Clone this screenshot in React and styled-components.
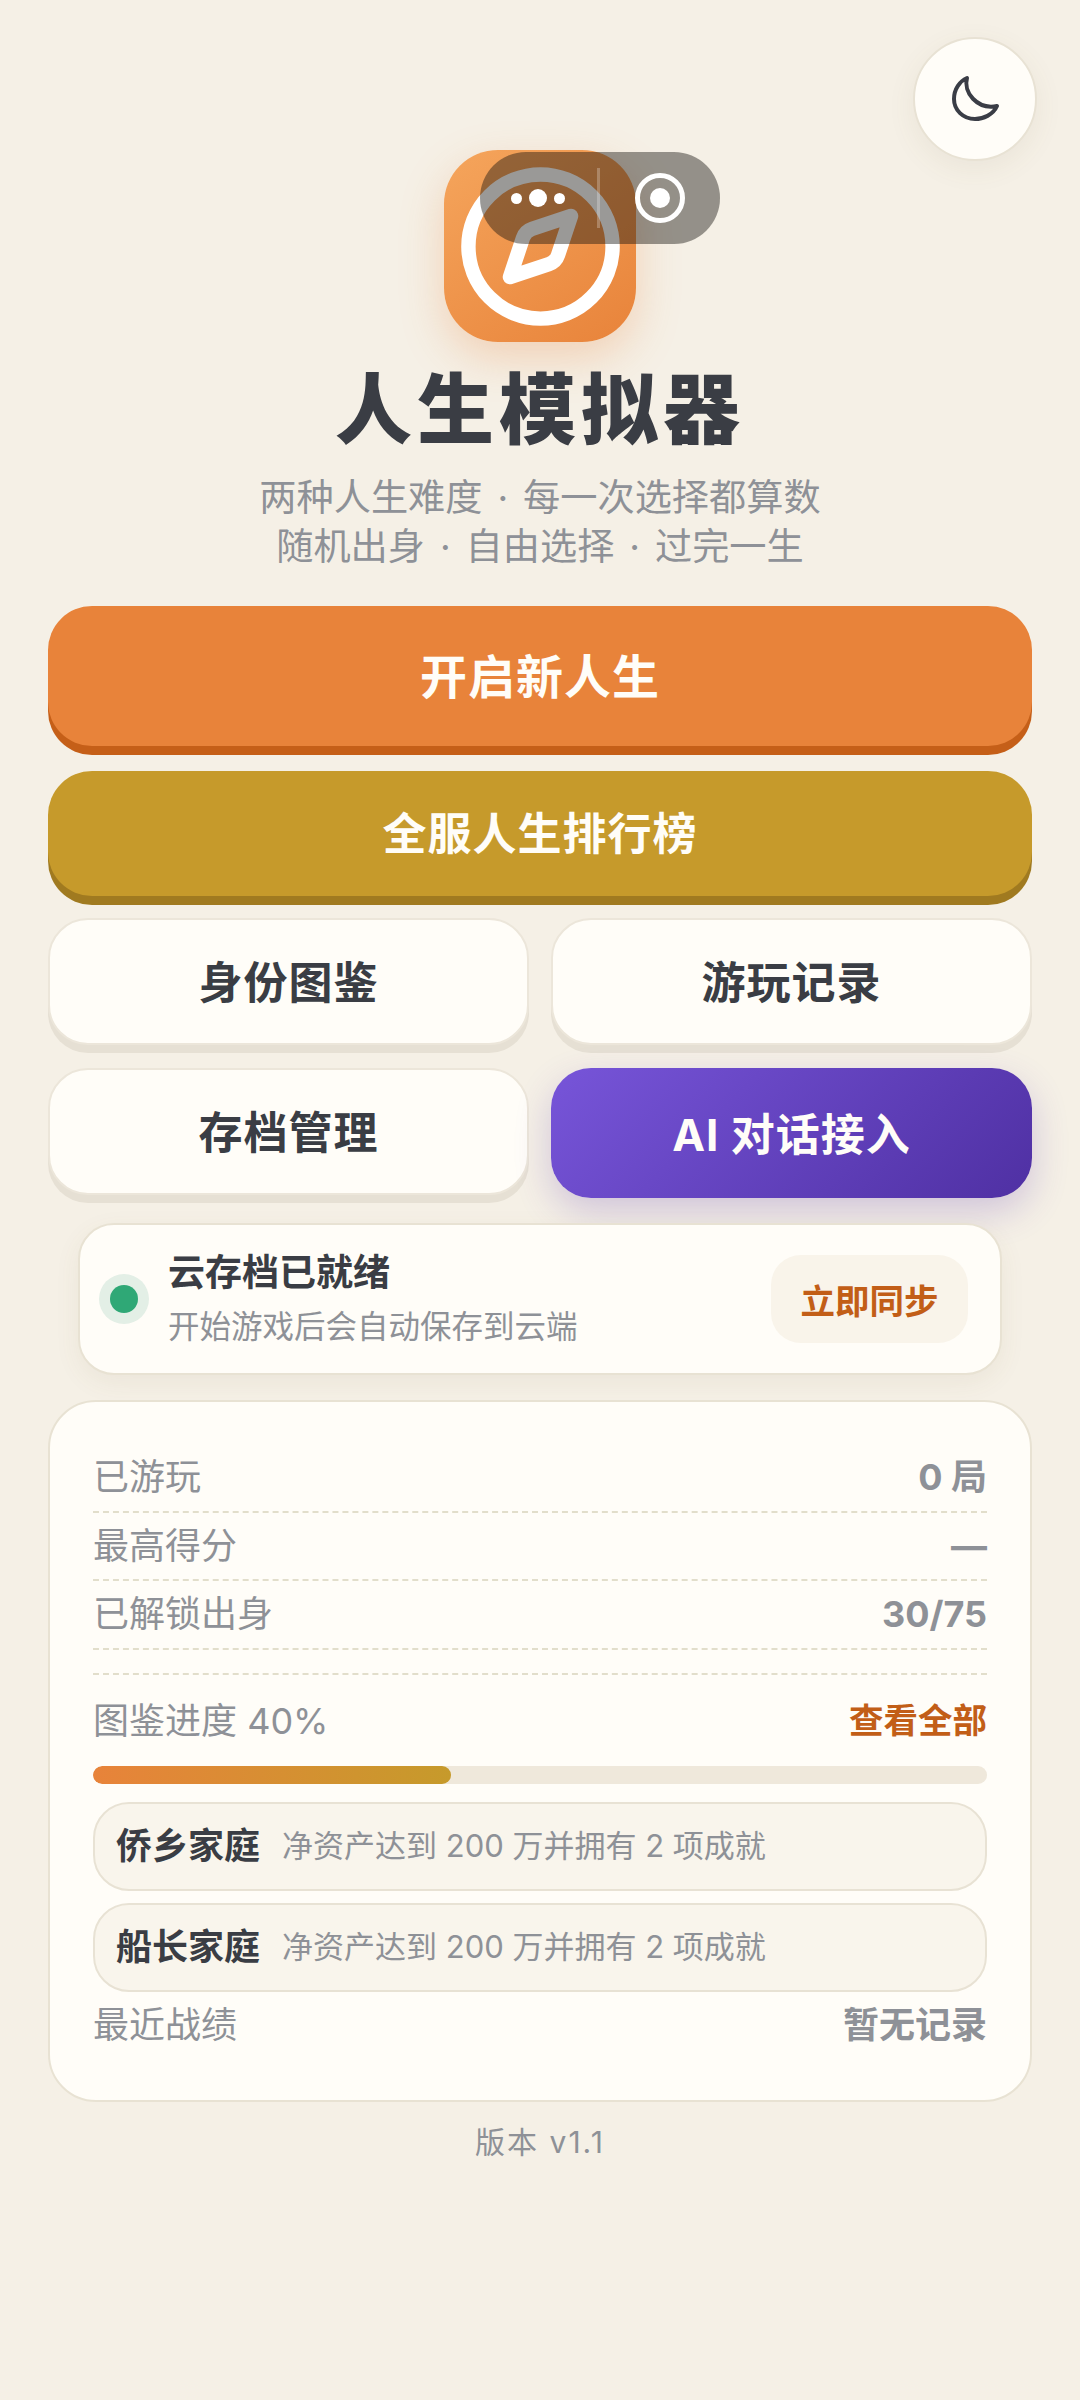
import React from "react";
import styled, { createGlobalStyle } from "styled-components";
import { Compass } from "lucide-react";

const GlobalStyle = createGlobalStyle`
  html, body {
    margin: 0;
    padding: 0;
    background: #f5f0e6;
  }
  body {
    font-family: Inter, "Noto Sans CJK SC", sans-serif;
    color: #3a3d44;
  }
  * {
    box-sizing: border-box;
  }
`;

const Page = styled.div`
  position: relative;
  width: 1080px;
  min-height: 2400px;
  padding: 150px 48px 0;
  display: flex;
  flex-direction: column;
`;

const ThemeButton = styled.button`
  position: absolute;
  top: 37px;
  right: 43px;
  width: 124px;
  height: 124px;
  border-radius: 50%;
  border: 2px solid #e8e2d4;
  background: #fffdf8;
  box-shadow: 0 8px 28px rgba(120, 100, 60, 0.08);
  display: flex;
  align-items: center;
  justify-content: center;
  padding: 0;
`;

const MenuPill = styled.div`
  position: absolute;
  top: 152px;
  left: 480px;
  width: 240px;
  height: 92px;
  border-radius: 46px;
  background: rgba(20, 18, 14, 0.43);
  display: flex;
  align-items: center;
`;

const DotsPart = styled.div`
  width: 120px;
  height: 60px;
  border-right: 3px solid rgba(255, 255, 255, 0.25);
  display: flex;
  align-items: center;
  justify-content: flex-end;
  gap: 7px;
  padding-right: 32px;
`;

const Dot = styled.span`
  width: ${(p) => (p.$big ? 18 : 11)}px;
  height: ${(p) => (p.$big ? 18 : 11)}px;
  border-radius: 50%;
  background: #fff;
`;

const TargetPart = styled.div`
  flex: 1;
  display: flex;
  align-items: center;
  justify-content: center;
`;

const Target = styled.span`
  width: 50px;
  height: 50px;
  border-radius: 50%;
  border: 5px solid #fff;
  display: flex;
  align-items: center;
  justify-content: center;

  &::after {
    content: "";
    width: 20px;
    height: 20px;
    border-radius: 50%;
    background: #fff;
  }
`;

const Hero = styled.header`
  display: flex;
  flex-direction: column;
  align-items: center;
`;

const Logo = styled.div`
  width: 192px;
  height: 192px;
  border-radius: 54px;
  background: linear-gradient(145deg, #f5a55c, #e8833a);
  box-shadow: 0 16px 44px rgba(232, 131, 58, 0.28);
  display: flex;
  align-items: center;
  justify-content: center;
`;

const Title = styled.h1`
  margin: 20px 0 0;
  font-size: 77px;
  line-height: 96px;
  font-weight: 900;
  letter-spacing: 5px;
  color: #3a3d44;
`;

const Subtitle = styled.p`
  margin: 15px 0 0;
  font-size: 37.2px;
  line-height: 49px;
  word-spacing: 4.5px;
  text-align: center;
  color: #8e9197;
`;

const Actions = styled.div`
  margin-top: 35px;
  display: flex;
  flex-direction: column;
`;

const BigButton = styled.button`
  width: 100%;
  height: ${(p) => p.$height}px;
  margin-bottom: ${(p) => p.$after}px;
  padding: 0 0 5px;
  border: 0;
  border-radius: 44px;
  background: ${(p) => p.$bg};
  box-shadow: 0 9px 0 ${(p) => p.$edge};
  color: #fffdf8;
  font-family: inherit;
  font-size: ${(p) => p.$size}px;
  font-weight: 700;
  letter-spacing: 1px;
`;

const ButtonGrid = styled.div`
  display: grid;
  grid-template-columns: 1fr 1fr;
  column-gap: 22px;
  row-gap: 23px;
  align-items: start;
`;

const PlainButton = styled.button`
  height: 127px;
  padding: 0 0 4px;
  border: 2px solid #ece6da;
  border-radius: 40px;
  background: #fffdf8;
  box-shadow: 0 8px 0 #e6e0d4;
  color: #3a3d44;
  font-family: inherit;
  font-size: 44px;
  font-weight: 700;
  letter-spacing: 1px;
`;

const AiButton = styled.button`
  height: 130px;
  padding: 0 0 3px;
  border: 0;
  border-radius: 40px;
  background: linear-gradient(135deg, #7755d9, #4f30a3);
  box-shadow: 0 14px 36px rgba(90, 60, 180, 0.24);
  color: #fffdf8;
  font-family: inherit;
  font-size: 44px;
  font-weight: 700;
  letter-spacing: 1px;
`;

const CloudCard = styled.section`
  margin: 25px 30px 0;
  height: 152px;
  padding: 0 32px 0 19px;
  border: 2px solid #e8e2d3;
  border-radius: 36px;
  background: #fffdf8;
  box-shadow: 0 8px 26px rgba(120, 100, 60, 0.07);
  display: flex;
  align-items: center;
`;

const StatusDot = styled.span`
  flex: none;
  width: 50px;
  height: 50px;
  border-radius: 50%;
  background: #e3efe6;
  display: flex;
  align-items: center;
  justify-content: center;

  &::after {
    content: "";
    width: 28px;
    height: 28px;
    border-radius: 50%;
    background: #2fa876;
  }
`;

const CloudText = styled.div`
  flex: 1;
  margin-left: 19px;
  padding-bottom: 4px;
  display: flex;
  flex-direction: column;
`;

const CloudTitle = styled.div`
  font-size: 37px;
  line-height: 50px;
  font-weight: 700;
  color: #3a3d44;
`;

const CloudHint = styled.div`
  margin-top: 9px;
  font-size: 31.5px;
  line-height: 40px;
  color: #8e9197;
`;

const SyncButton = styled.button`
  width: 197px;
  height: 88px;
  border: 0;
  border-radius: 30px;
  background: #f9f4ea;
  color: #c25e17;
  font-family: inherit;
  font-size: 34.5px;
  font-weight: 700;
`;

const StatsCard = styled.section`
  margin-top: 25px;
  height: 702px;
  padding: 42px 43px 0;
  border: 2px solid #e8e2d3;
  border-radius: 48px;
  background: #fffdf8;
  display: flex;
  flex-direction: column;
`;

const StatRow = styled.div`
  height: 68.5px;
  border-bottom: 2px dashed #e2decb;
  display: flex;
  align-items: center;
  justify-content: space-between;
`;

const StatLabel = styled.span`
  font-size: 36px;
  line-height: 44px;
  color: #8e9197;
`;

const StatValue = styled.span`
  font-size: 36px;
  line-height: 44px;
  font-weight: 700;
  color: #8e9197;
`;

const ProgressHead = styled.div`
  margin-top: 23px;
  padding-top: 24px;
  border-top: 2px dashed #e2decb;
  display: flex;
  align-items: center;
  justify-content: space-between;
`;

const ViewAll = styled.span`
  font-size: 34.5px;
  line-height: 44px;
  font-weight: 700;
  color: #c25e17;
`;

const ProgressTrack = styled.div`
  margin-top: 23px;
  height: 18px;
  border-radius: 9px;
  background: #efe8db;
  overflow: hidden;
`;

const ProgressFill = styled.div`
  width: ${(p) => p.$value}%;
  height: 100%;
  border-radius: 9px;
  background: linear-gradient(90deg, #e8833a, #c69a2b);
`;

const ChipList = styled.div`
  margin-top: 18px;
  display: flex;
  flex-direction: column;
  gap: 12px;
`;

const Chip = styled.div`
  height: 89px;
  padding: 0 21px;
  border: 2px solid #e8e2d4;
  border-radius: 36px;
  background: #f9f5ec;
  display: flex;
  align-items: center;
  gap: 22px;
`;

const ChipName = styled.span`
  font-size: 36px;
  line-height: 44px;
  font-weight: 700;
  color: #3a3d44;
`;

const ChipDesc = styled.span`
  font-size: 31px;
  line-height: 40px;
  color: #8e9197;
`;

const LastRow = styled.div`
  margin-top: 11px;
  display: flex;
  align-items: center;
  justify-content: space-between;
`;

const Version = styled.footer`
  margin-top: 19px;
  font-size: 30px;
  line-height: 42px;
  letter-spacing: 2px;
  text-align: center;
  color: #8e9197;
`;

const unlocks = ["侨乡家庭", "船长家庭"];

const stats = [
  ["已游玩", "0 局"],
  ["最高得分", "—"],
  ["已解锁出身", "30/75"],
];

function MoonIcon() {
  return (
    <svg width="50" height="50" viewBox="0 0 50 50" fill="none" stroke="#3a3d46" strokeWidth="4" strokeLinecap="round" strokeLinejoin="round">
      <path d="M17 4C13 18 27 36 47 32C43 41 33 45 25 45C13 45 4 36 4 25C4 15 10 7 17 4Z" />
    </svg>
  );
}

export default function App() {
  return (
    <Page>
      <GlobalStyle />
      <ThemeButton aria-label="切换主题">
        <MoonIcon />
      </ThemeButton>

      <Hero>
        <Logo>
          <Compass size={173} color="#ffffff" strokeWidth={2} />
        </Logo>
        <Title>人生模拟器</Title>
        <Subtitle>
          两种人生难度 · 每一次选择都算数
          <br />
          随机出身 · 自由选择 · 过完一生
        </Subtitle>
      </Hero>

      <MenuPill>
        <DotsPart>
          <Dot />
          <Dot $big />
          <Dot />
        </DotsPart>
        <TargetPart>
          <Target />
        </TargetPart>
      </MenuPill>

      <Actions>
        <BigButton $height={140} $after={25} $bg="#e8833a" $edge="#c55f18" $size={47}>
          开启新人生
        </BigButton>
        <BigButton $height={125} $after={22} $bg="#c69a2b" $edge="#a07a20" $size={44}>
          全服人生排行榜
        </BigButton>
        <ButtonGrid>
          <PlainButton>身份图鉴</PlainButton>
          <PlainButton>游玩记录</PlainButton>
          <PlainButton>存档管理</PlainButton>
          <AiButton>AI 对话接入</AiButton>
        </ButtonGrid>
      </Actions>

      <CloudCard>
        <StatusDot />
        <CloudText>
          <CloudTitle>云存档已就绪</CloudTitle>
          <CloudHint>开始游戏后会自动保存到云端</CloudHint>
        </CloudText>
        <SyncButton>立即同步</SyncButton>
      </CloudCard>

      <StatsCard>
        {stats.map(([label, value]) => (
          <StatRow key={label}>
            <StatLabel>{label}</StatLabel>
            <StatValue>{value}</StatValue>
          </StatRow>
        ))}
        <ProgressHead>
          <StatLabel>图鉴进度 40%</StatLabel>
          <ViewAll>查看全部</ViewAll>
        </ProgressHead>
        <ProgressTrack>
          <ProgressFill $value={40} />
        </ProgressTrack>
        <ChipList>
          {unlocks.map((name) => (
            <Chip key={name}>
              <ChipName>{name}</ChipName>
              <ChipDesc>净资产达到 200 万并拥有 2 项成就</ChipDesc>
            </Chip>
          ))}
        </ChipList>
        <LastRow>
          <StatLabel>最近战绩</StatLabel>
          <StatValue>暂无记录</StatValue>
        </LastRow>
      </StatsCard>

      <Version>版本 v1.1</Version>
    </Page>
  );
}
